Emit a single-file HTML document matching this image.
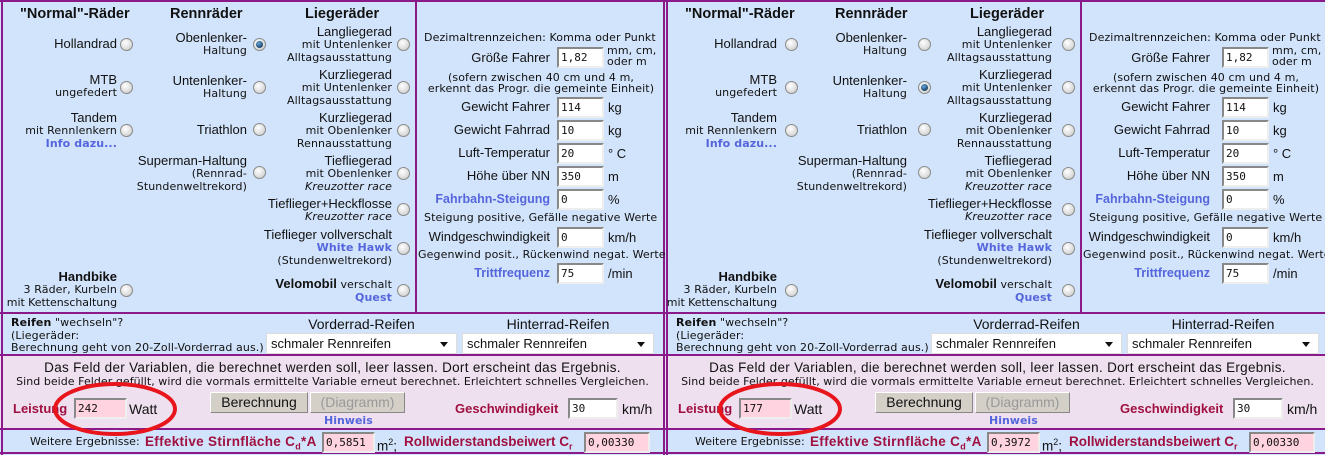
<!DOCTYPE html>
<html><head><meta charset="utf-8"><style>
*{margin:0;padding:0;box-sizing:border-box}
body{width:1325px;height:455px;overflow:hidden;background:#fff;font-family:"Liberation Sans",Arial,sans-serif;color:#111;position:relative}
.p{position:absolute;top:0;width:665px;height:455px;overflow:hidden}
.a{position:absolute;white-space:nowrap}
.r{text-align:right}
.b{font-size:13px;line-height:13px}
.s{font-family:"DejaVu Sans",Verdana,sans-serif;font-size:11px;line-height:13px;letter-spacing:0.1px}
.i{font-style:italic}
.bl{color:#5566dd;font-weight:bold}
.hd{font-weight:bold;font-size:14.5px}
.ln{position:absolute;background:#8a1a8a}
.rad{position:absolute;width:13px;height:13px;border-radius:50%;border:1px solid #8a8a8a;background:radial-gradient(circle at 40% 35%,#fff,#ddd 60%,#bbb)}
.rad.on::after{content:"";position:absolute;left:2px;top:2px;width:7px;height:7px;border-radius:50%;background:radial-gradient(circle at 40% 35%,#6ad,#135 80%)}
.in{position:absolute;width:47px;height:21px;background:#fff;border:2px solid;border-color:#888 #eee #eee #888;font-family:"DejaVu Sans Mono",monospace;font-size:11px;line-height:17px;padding-left:2px}
.pk{background:#ffd3e0}
.lb{font-size:13px;line-height:16px}
.dr{color:#a01040;font-weight:bold}
.sel{position:absolute;height:21px;background:#fff;border:1px solid #ddd;font-size:13px;line-height:19px;padding-left:4px}
.sel::after{content:"";position:absolute;right:8px;top:8px;border:4px solid transparent;border-top:5px solid #111}
.btn{position:absolute;height:21px;background:#d4d0c8;border:1px solid;border-color:#fff #888 #888 #fff;font-size:14px;line-height:19px;text-align:center}
.big{font-size:13.5px;letter-spacing:0.3px}
.s.sind{letter-spacing:0.05px}
.s.we{letter-spacing:0}
.rs{font-size:13.5px;line-height:16px}
.rs.dr{letter-spacing:0.3px}
</style></head><body>

<div class="p" style="left:0;background:#d2e4fb">
<div class="a" style="left:0;top:355px;width:665px;height:74px;background:#efe0f0"></div>
<div class="ln" style="left:0;top:0;width:665px;height:2px"></div>
<div class="ln" style="left:1px;top:0;width:2px;height:455px"></div>
<div class="ln" style="left:663px;top:0;width:2px;height:455px"></div>
<div class="ln" style="left:415px;top:0;width:2px;height:313px"></div>
<div class="ln" style="left:0;top:312px;width:665px;height:2px"></div>
<div class="ln" style="left:0;top:354px;width:665px;height:2px"></div>
<div class="ln" style="left:0;top:428px;width:665px;height:2px"></div>
<div class="ln" style="left:0;top:452px;width:665px;height:2px"></div>

<div class="a hd" style="left:20px;top:6px">"Normal"-Räder</div>
<div class="a hd" style="left:170px;top:6px">Rennräder</div>
<div class="a hd" style="left:305px;top:6px">Liegeräder</div>

<div class="a r" style="right:548px;top:37px"><div class="b">Hollandrad</div></div>
<div class="a r" style="right:548px;top:73px"><div class="b">MTB</div><div class="s">ungefedert</div></div>
<div class="a r" style="right:548px;top:111px"><div class="b">Tandem</div><div class="s">mit Rennlenkern</div><div class="s bl">Info dazu...</div></div>
<div class="a r" style="right:548px;top:270px"><div class="b" style="font-weight:bold">Handbike</div><div class="s">3 Räder, Kurbeln</div><div class="s" style="letter-spacing:-0.05px">mit Kettenschaltung</div></div>

<div class="a r" style="right:418px;top:31px"><div class="b">Obenlenker-</div><div class="s">Haltung</div></div>
<div class="a r" style="right:418px;top:74px"><div class="b">Untenlenker-</div><div class="s">Haltung</div></div>
<div class="a r" style="right:418px;top:123px"><div class="b">Triathlon</div></div>
<div class="a r" style="right:418px;top:154px"><div class="b">Superman-Haltung</div><div class="s">(Rennrad-</div><div class="s">Stundenweltrekord)</div></div>

<div class="a r" style="right:273px;top:25px"><div class="b">Langliegerad</div><div class="s">mit Untenlenker</div><div class="s">Alltagsausstattung</div></div>
<div class="a r" style="right:273px;top:68px"><div class="b">Kurzliegerad</div><div class="s">mit Untenlenker</div><div class="s">Alltagsausstattung</div></div>
<div class="a r" style="right:273px;top:111px"><div class="b">Kurzliegerad</div><div class="s">mit Obenlenker</div><div class="s">Rennausstattung</div></div>
<div class="a r" style="right:273px;top:154px"><div class="b">Tiefliegerad</div><div class="s">mit Obenlenker</div><div class="s i">Kreuzotter race</div></div>
<div class="a r" style="right:273px;top:197px"><div class="b">Tieflieger+Heckflosse</div><div class="s i">Kreuzotter race</div></div>
<div class="a r" style="right:273px;top:228px"><div class="b">Tieflieger vollverschalt</div><div class="s bl">White Hawk</div><div class="s">(Stundenweltrekord)</div></div>
<div class="a r" style="right:273px;top:277px"><div class="b"><b>Velomobil</b> <span class="s">verschalt</span></div><div class="s bl">Quest</div></div>

<div class="rad" style="left:120px;top:38px"></div>
<div class="rad" style="left:120px;top:81px"></div>
<div class="rad" style="left:120px;top:124px"></div>
<div class="rad" style="left:120px;top:284px"></div>
<div class="rad on" style="left:253px;top:38px"></div>
<div class="rad" style="left:253px;top:81px"></div>
<div class="rad" style="left:253px;top:123px"></div>
<div class="rad" style="left:253px;top:166px"></div>
<div class="rad" style="left:397px;top:38px"></div>
<div class="rad" style="left:397px;top:81px"></div>
<div class="rad" style="left:397px;top:124px"></div>
<div class="rad" style="left:397px;top:167px"></div>
<div class="rad" style="left:397px;top:203px"></div>
<div class="rad" style="left:397px;top:242px"></div>
<div class="rad" style="left:397px;top:284px"></div>

<div class="a s" style="left:424px;top:31px">Dezimaltrennzeichen: Komma oder Punkt</div>
<div class="a r lb" style="right:115px;top:50px">Größe Fahrer</div><div class="in" style="left:557px;top:47px">1,82</div>
<div class="a s" style="left:607px;top:45px;line-height:11px">mm, cm,<br>oder m</div>
<div class="a s" style="left:418px;top:72px;width:246px;text-align:center;line-height:11px">(sofern zwischen 40 cm und 4 m,<br>erkennt das Progr. die gemeinte Einheit)</div>
<div class="a r lb" style="right:115px;top:99px">Gewicht Fahrer</div><div class="in" style="left:557px;top:97px">114</div><div class="a lb" style="left:608px;top:100px">kg</div>
<div class="a r lb" style="right:115px;top:122px">Gewicht Fahrrad</div><div class="in" style="left:557px;top:120px">10</div><div class="a lb" style="left:608px;top:123px">kg</div>
<div class="a r lb" style="right:115px;top:145px">Luft-Temperatur</div><div class="in" style="left:557px;top:143px">20</div><div class="a lb" style="left:608px;top:146px">° C</div>
<div class="a r lb" style="right:115px;top:168px">Höhe über NN</div><div class="in" style="left:557px;top:166px">350</div><div class="a lb" style="left:608px;top:169px">m</div>
<div class="a r lb bl" style="right:115px;top:191px;font-size:12.5px">Fahrbahn-Steigung</div><div class="in" style="left:557px;top:189px">0</div><div class="a lb" style="left:608px;top:192px">%</div>
<div class="a s" style="left:424px;top:211px">Steigung positive, Gefälle negative Werte</div>
<div class="a r lb" style="right:115px;top:229px">Windgeschwindigkeit</div><div class="in" style="left:557px;top:227px">0</div><div class="a lb" style="left:608px;top:230px">km/h</div>
<div class="a s" style="left:418px;top:248px">Gegenwind posit., Rückenwind negat. Werte</div>
<div class="a r lb bl" style="right:115px;top:265px;font-size:12.5px">Trittfrequenz</div><div class="in" style="left:557px;top:263px">75</div><div class="a lb" style="left:608px;top:266px">/min</div>

<div class="a s" style="left:11px;top:317px;line-height:12.5px"><b>Reifen</b> "wechseln"?<br>(Liegeräder:<br>Berechnung geht von 20-Zoll-Vorderrad aus.)</div>
<div class="a lb" style="left:266px;top:316px;width:191px;text-align:center;font-size:14px">Vorderrad-Reifen</div>
<div class="a lb" style="left:462px;top:316px;width:192px;text-align:center;font-size:14px">Hinterrad-Reifen</div>
<div class="sel" style="left:266px;top:333px;width:191px">schmaler Rennreifen</div>
<div class="sel" style="left:462px;top:333px;width:192px">schmaler Rennreifen</div>

<div class="a lb big" style="left:0;top:360px;width:665px;text-align:center">Das Feld der Variablen, die berechnet werden soll, leer lassen. Dort erscheint das Ergebnis.</div>
<div class="a s sind" style="left:0;top:375px;width:665px;text-align:center">Sind beide Felder gefüllt, wird die vormals ermittelte Variable erneut berechnet. Erleichtert schnelles Vergleichen.</div>
<div class="a lb dr" style="left:13px;top:401px">Leistung</div>
<div class="in pk" style="left:74px;top:398px;width:53px">242</div>
<div class="a lb" style="left:129px;top:401px;font-size:14px">Watt</div>
<svg class="a" style="left:50px;top:380px" width="130" height="58"><ellipse cx="65" cy="29" rx="60" ry="25" fill="none" stroke="#e8161c" stroke-width="4"/></svg>
<div class="btn" style="left:210px;top:392px;width:98px">Berechnung</div>
<div class="btn" style="left:310px;top:392px;width:95px;color:#999">(Diagramm)</div>
<div class="a s bl" style="left:324px;top:414px;letter-spacing:0">Hinweis</div>
<div class="a lb dr" style="left:455px;top:401px">Geschwindigkeit</div>
<div class="in" style="left:568px;top:398px;width:50px">30</div>
<div class="a lb" style="left:622px;top:401px;font-size:14px">km/h</div>

<div class="a s we" style="left:30px;top:435px">Weitere Ergebnisse:</div>
<div class="a rs dr" style="left:145px;top:434px">Effektive Stirnfläche C<sub style="font-size:9px">d</sub>*A</div>
<div class="in pk" style="left:322px;top:432px;width:53px">0,5851</div>
<div class="a rs" style="left:377px;top:434px">m<sup style="font-size:9px">2</sup>;</div>
<div class="a rs dr" style="left:404px;top:434px;letter-spacing:0">Rollwiderstandsbeiwert C<sub style="font-size:9px">r</sub></div>
<div class="in pk" style="left:584px;top:432px;width:66px">0,00330</div>
</div>

<div class="p" style="left:665px;width:660px;background:#d2e4fb">
<div class="a" style="left:0;top:355px;width:665px;height:74px;background:#efe0f0"></div>
<div class="ln" style="left:0;top:0;width:665px;height:2px"></div>
<div class="ln" style="left:1px;top:0;width:2px;height:455px"></div>
<div class="ln" style="left:415px;top:0;width:2px;height:313px"></div>
<div class="ln" style="left:0;top:312px;width:665px;height:2px"></div>
<div class="ln" style="left:0;top:354px;width:665px;height:2px"></div>
<div class="ln" style="left:0;top:428px;width:665px;height:2px"></div>
<div class="ln" style="left:0;top:452px;width:665px;height:2px"></div>

<div class="a hd" style="left:20px;top:6px">"Normal"-Räder</div>
<div class="a hd" style="left:170px;top:6px">Rennräder</div>
<div class="a hd" style="left:305px;top:6px">Liegeräder</div>

<div class="a r" style="right:548px;top:37px"><div class="b">Hollandrad</div></div>
<div class="a r" style="right:548px;top:73px"><div class="b">MTB</div><div class="s">ungefedert</div></div>
<div class="a r" style="right:548px;top:111px"><div class="b">Tandem</div><div class="s">mit Rennlenkern</div><div class="s bl">Info dazu...</div></div>
<div class="a r" style="right:548px;top:270px"><div class="b" style="font-weight:bold">Handbike</div><div class="s">3 Räder, Kurbeln</div><div class="s" style="letter-spacing:-0.05px">mit Kettenschaltung</div></div>

<div class="a r" style="right:418px;top:31px"><div class="b">Obenlenker-</div><div class="s">Haltung</div></div>
<div class="a r" style="right:418px;top:74px"><div class="b">Untenlenker-</div><div class="s">Haltung</div></div>
<div class="a r" style="right:418px;top:123px"><div class="b">Triathlon</div></div>
<div class="a r" style="right:418px;top:154px"><div class="b">Superman-Haltung</div><div class="s">(Rennrad-</div><div class="s">Stundenweltrekord)</div></div>

<div class="a r" style="right:273px;top:25px"><div class="b">Langliegerad</div><div class="s">mit Untenlenker</div><div class="s">Alltagsausstattung</div></div>
<div class="a r" style="right:273px;top:68px"><div class="b">Kurzliegerad</div><div class="s">mit Untenlenker</div><div class="s">Alltagsausstattung</div></div>
<div class="a r" style="right:273px;top:111px"><div class="b">Kurzliegerad</div><div class="s">mit Obenlenker</div><div class="s">Rennausstattung</div></div>
<div class="a r" style="right:273px;top:154px"><div class="b">Tiefliegerad</div><div class="s">mit Obenlenker</div><div class="s i">Kreuzotter race</div></div>
<div class="a r" style="right:273px;top:197px"><div class="b">Tieflieger+Heckflosse</div><div class="s i">Kreuzotter race</div></div>
<div class="a r" style="right:273px;top:228px"><div class="b">Tieflieger vollverschalt</div><div class="s bl">White Hawk</div><div class="s">(Stundenweltrekord)</div></div>
<div class="a r" style="right:273px;top:277px"><div class="b"><b>Velomobil</b> <span class="s">verschalt</span></div><div class="s bl">Quest</div></div>

<div class="rad" style="left:120px;top:38px"></div>
<div class="rad" style="left:120px;top:81px"></div>
<div class="rad" style="left:120px;top:124px"></div>
<div class="rad" style="left:120px;top:284px"></div>
<div class="rad" style="left:253px;top:38px"></div>
<div class="rad on" style="left:253px;top:81px"></div>
<div class="rad" style="left:253px;top:123px"></div>
<div class="rad" style="left:253px;top:166px"></div>
<div class="rad" style="left:397px;top:38px"></div>
<div class="rad" style="left:397px;top:81px"></div>
<div class="rad" style="left:397px;top:124px"></div>
<div class="rad" style="left:397px;top:167px"></div>
<div class="rad" style="left:397px;top:203px"></div>
<div class="rad" style="left:397px;top:242px"></div>
<div class="rad" style="left:397px;top:284px"></div>

<div class="a s" style="left:424px;top:31px">Dezimaltrennzeichen: Komma oder Punkt</div>
<div class="a r lb" style="right:115px;top:50px">Größe Fahrer</div><div class="in" style="left:557px;top:47px">1,82</div>
<div class="a s" style="left:607px;top:45px;line-height:11px">mm, cm,<br>oder m</div>
<div class="a s" style="left:418px;top:72px;width:246px;text-align:center;line-height:11px">(sofern zwischen 40 cm und 4 m,<br>erkennt das Progr. die gemeinte Einheit)</div>
<div class="a r lb" style="right:115px;top:99px">Gewicht Fahrer</div><div class="in" style="left:557px;top:97px">114</div><div class="a lb" style="left:608px;top:100px">kg</div>
<div class="a r lb" style="right:115px;top:122px">Gewicht Fahrrad</div><div class="in" style="left:557px;top:120px">10</div><div class="a lb" style="left:608px;top:123px">kg</div>
<div class="a r lb" style="right:115px;top:145px">Luft-Temperatur</div><div class="in" style="left:557px;top:143px">20</div><div class="a lb" style="left:608px;top:146px">° C</div>
<div class="a r lb" style="right:115px;top:168px">Höhe über NN</div><div class="in" style="left:557px;top:166px">350</div><div class="a lb" style="left:608px;top:169px">m</div>
<div class="a r lb bl" style="right:115px;top:191px;font-size:12.5px">Fahrbahn-Steigung</div><div class="in" style="left:557px;top:189px">0</div><div class="a lb" style="left:608px;top:192px">%</div>
<div class="a s" style="left:424px;top:211px">Steigung positive, Gefälle negative Werte</div>
<div class="a r lb" style="right:115px;top:229px">Windgeschwindigkeit</div><div class="in" style="left:557px;top:227px">0</div><div class="a lb" style="left:608px;top:230px">km/h</div>
<div class="a s" style="left:418px;top:248px">Gegenwind posit., Rückenwind negat. Werte</div>
<div class="a r lb bl" style="right:115px;top:265px;font-size:12.5px">Trittfrequenz</div><div class="in" style="left:557px;top:263px">75</div><div class="a lb" style="left:608px;top:266px">/min</div>

<div class="a s" style="left:11px;top:317px;line-height:12.5px"><b>Reifen</b> "wechseln"?<br>(Liegeräder:<br>Berechnung geht von 20-Zoll-Vorderrad aus.)</div>
<div class="a lb" style="left:266px;top:316px;width:191px;text-align:center;font-size:14px">Vorderrad-Reifen</div>
<div class="a lb" style="left:462px;top:316px;width:192px;text-align:center;font-size:14px">Hinterrad-Reifen</div>
<div class="sel" style="left:266px;top:333px;width:191px">schmaler Rennreifen</div>
<div class="sel" style="left:462px;top:333px;width:192px">schmaler Rennreifen</div>

<div class="a lb big" style="left:0;top:360px;width:665px;text-align:center">Das Feld der Variablen, die berechnet werden soll, leer lassen. Dort erscheint das Ergebnis.</div>
<div class="a s sind" style="left:0;top:375px;width:665px;text-align:center">Sind beide Felder gefüllt, wird die vormals ermittelte Variable erneut berechnet. Erleichtert schnelles Vergleichen.</div>
<div class="a lb dr" style="left:13px;top:401px">Leistung</div>
<div class="in pk" style="left:74px;top:398px;width:53px">177</div>
<div class="a lb" style="left:129px;top:401px;font-size:14px">Watt</div>
<svg class="a" style="left:50px;top:380px" width="130" height="58"><ellipse cx="65" cy="29" rx="60" ry="25" fill="none" stroke="#e8161c" stroke-width="4"/></svg>
<div class="btn" style="left:210px;top:392px;width:98px">Berechnung</div>
<div class="btn" style="left:310px;top:392px;width:95px;color:#999">(Diagramm)</div>
<div class="a s bl" style="left:324px;top:414px;letter-spacing:0">Hinweis</div>
<div class="a lb dr" style="left:455px;top:401px">Geschwindigkeit</div>
<div class="in" style="left:568px;top:398px;width:50px">30</div>
<div class="a lb" style="left:622px;top:401px;font-size:14px">km/h</div>

<div class="a s we" style="left:30px;top:435px">Weitere Ergebnisse:</div>
<div class="a rs dr" style="left:145px;top:434px">Effektive Stirnfläche C<sub style="font-size:9px">d</sub>*A</div>
<div class="in pk" style="left:322px;top:432px;width:53px">0,3972</div>
<div class="a rs" style="left:377px;top:434px">m<sup style="font-size:9px">2</sup>;</div>
<div class="a rs dr" style="left:404px;top:434px;letter-spacing:0">Rollwiderstandsbeiwert C<sub style="font-size:9px">r</sub></div>
<div class="in pk" style="left:584px;top:432px;width:66px">0,00330</div>
</div>
</body></html>
